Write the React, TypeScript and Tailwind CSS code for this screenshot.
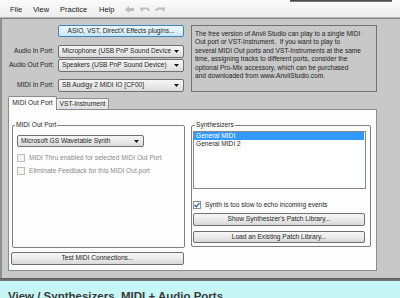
import React from "react";

function Arrow() {
  return (
    <svg width="5" height="3" viewBox="0 0 5 3" className="shrink-0">
      <path d="M0 0 L5 0 L2.5 3 Z" fill="#1a1a1a" />
    </svg>
  );
}

function Btn({ className, children }: { className: string; children: React.ReactNode }) {
  return (
    <div
      className={
        "flex items-center justify-center border border-[#707070] rounded-[2px] bg-linear-to-b from-[#f5f5f5] via-[#ebebeb] to-[#d8d8d8] text-[#1e1e1e] whitespace-nowrap " +
        className
      }
    >
      {children}
    </div>
  );
}

function Combo({ className, text }: { className: string; text: string }) {
  return (
    <div
      className={
        "flex items-center border border-[#707070] rounded-[2px] bg-linear-to-b from-[#f5f5f5] via-[#ebebeb] to-[#dadada] pl-[3px] pr-[4px] " +
        className
      }
    >
      <span className="flex-1 overflow-hidden whitespace-nowrap text-[#1e1e1e]">{text}</span>
      <span className="ml-[3px] flex items-center">
        <Arrow />
      </span>
    </div>
  );
}

export default function App() {
  return (
    <div className="w-[400px] h-[298px] overflow-hidden flex flex-col bg-[#c8c8c8] text-[#1f1f1f] text-[6.6px] leading-none font-['Liberation_Sans',Arial,sans-serif]">
      {/* Menu bar */}
      <div className="h-[18px] shrink-0 flex flex-col bg-linear-to-b from-[#fbfbfb] to-[#ededed] border-b border-[#b3b3b3]">
        <div className="h-[2px] shrink-0 flex">
          <div className="w-[290px]" />
          <div className="w-[102px] bg-linear-to-b from-[#3a3a3a] to-[#8c8c8c]" />
        </div>
        <div className="flex items-center h-[15px] text-[7.5px] text-[#1a1a1a]">
          <span className="w-[33px] pl-[10px]">File</span>
          <span className="w-[27px]">View</span>
          <span className="w-[39px]">Practice</span>
          <span className="w-[25px]">Help</span>
          <svg width="9" height="7" viewBox="0 0 9 7" className="ml-[1px]">
            <path d="M0 3.5 L4 0 L4 2 L9 2 L9 5 L4 5 L4 7 Z" fill="#bcbcbc" />
          </svg>
          <svg width="12" height="8" viewBox="0 0 12 8" className="ml-[5px]">
            <path d="M3.5 3.5 Q7 0.5 10.5 4.5" stroke="#bdbdbd" strokeWidth="2" fill="none" />
            <path d="M0.5 1.5 L5 1.5 L2.5 6 Z" fill="#bdbdbd" />
          </svg>
          <svg width="12" height="8" viewBox="0 0 12 8" className="ml-[3px]">
            <path d="M8.5 3.5 Q5 0.5 1.5 4.5" stroke="#bdbdbd" strokeWidth="2" fill="none" />
            <path d="M11.5 1.5 L7 1.5 L9.5 6 Z" fill="#bdbdbd" />
          </svg>
        </div>
      </div>

      {/* Main gray area */}
      <div className="h-[260px] shrink-0 flex flex-col border-t border-l-2 border-t-[#858585] border-l-[#8f8f8f]">
        <div className="flex items-start">
          <div className="w-[182px] flex flex-col">
            <div className="ml-[56px] mt-[6px] w-[126px] h-[12px] flex items-center justify-center border border-[#3f86bd] rounded-[2px] bg-linear-to-b from-[#eef8fd] via-[#e0f1fb] to-[#c9e6f7] text-[#1e1e1e] whitespace-nowrap">
              ASIO, VST, DirectX Effects plugins...
            </div>
            <div className="flex items-center mt-[8px]">
              <span className="w-[52px] text-right whitespace-nowrap">Audio In Port:</span>
              <Combo className="ml-[4px] w-[126px] h-[13px]" text="Microphone (USB PnP Sound Device)" />
            </div>
            <div className="flex items-center mt-[1px]">
              <span className="w-[52px] text-right whitespace-nowrap">Audio Out Port:</span>
              <Combo className="ml-[4px] w-[126px] h-[13px]" text="Speakers (USB PnP Sound Device)" />
            </div>
            <div className="flex items-center mt-[7px]">
              <span className="w-[52px] text-right whitespace-nowrap">MIDI In Port:</span>
              <Combo className="ml-[4px] w-[126px] h-[13px]" text="SB Audigy 2 MIDI IO [CF00]" />
            </div>
          </div>
          <div className="ml-[7px] mt-[6px] w-[186px] h-[67px] border border-[#727272] pl-[3px] pt-[4px] leading-[8.4px] whitespace-nowrap text-[#1e1e1e]">
            The free version of Anvil Studio can play to a single MIDI
            <br />
            Out port or VST-Instrument.&nbsp; If you want to play to
            <br />
            several MIDI Out ports and VST-Instruments at the same
            <br />
            time, assigning tracks to different ports, consider the
            <br />
            optional Pro-Mix accessory, which can be purchased
            <br />
            and downloaded from www.AnvilStudio.com.
          </div>
        </div>

        {/* Tabs */}
        <div className="mt-[4px] ml-[6px] h-[13px] flex items-end">
          <div className="relative z-10 w-[49px] h-[14px] -mb-[1px] bg-[#fdfdfd] border border-b-0 border-[#898c95] rounded-t-[2px] flex items-center justify-center whitespace-nowrap">
            MIDI Out Port
          </div>
          <div className="w-[52px] h-[11px] border border-l-0 border-b-0 border-[#898c95] rounded-tr-[2px] bg-linear-to-b from-[#f3f3f3] to-[#e0e0e0] flex items-center justify-center whitespace-nowrap">
            VST-Instrument
          </div>
        </div>

        {/* Tab panel */}
        <div className="ml-[6px] w-[369px] h-[162px] bg-[#fdfdfd] border border-[#898c95] flex items-start">
          <div className="ml-[3px] w-[173px] flex flex-col">
            <fieldset className="mt-[11px] h-[127px] border border-[#7f7f7f] rounded-[2px]">
              <legend className="ml-[2px] px-[1px] leading-[8px]">MIDI Out Port</legend>
              <Combo className="mt-[6px] ml-[4px] w-[127px] h-[12px]" text="Microsoft GS Wavetable Synth" />
              <div className="mt-[7px] ml-[4px] h-[8px] flex items-center">
                <span className="w-[8px] h-[8px] border border-[#bcbcbc] bg-[#f4f4f4]" />
                <span className="ml-[4px] text-[#8a8a8a] whitespace-nowrap">MIDI Thru enabled for selected MIDI Out Port</span>
              </div>
              <div className="mt-[5px] ml-[4px] h-[8px] flex items-center">
                <span className="w-[8px] h-[8px] border border-[#bcbcbc] bg-[#f4f4f4]" />
                <span className="ml-[4px] text-[#8a8a8a] whitespace-nowrap">Eliminate Feedback for this MIDI Out port</span>
              </div>
            </fieldset>
            <Btn className="mt-[4px] -ml-[1px] w-[173px] h-[13px]">Test MIDI Connections...</Btn>
          </div>

          <fieldset className="ml-[6px] mt-[11px] w-[180px] h-[126px] border border-[#7f7f7f] rounded-[2px]">
            <legend className="ml-[3px] px-[1px] leading-[8px]">Synthesizers</legend>
            <div className="mt-[2px] ml-[1px] w-[173px] h-[58px] border border-[#828790] bg-white flex flex-col">
              <div className="h-[8px] mr-[1px] bg-[#3399ff] text-white pl-[2px] flex items-center">General MIDI</div>
              <div className="h-[8px] pl-[2px] flex items-center">General MIDI 2</div>
            </div>
            <div className="mt-[12px] ml-[1px] h-[8px] flex items-center">
              <span className="w-[8px] h-[8px] border border-[#8e8f8f] bg-white flex items-center justify-center">
                <svg width="6" height="6" viewBox="0 0 6 6">
                  <path d="M0.6 3 L2.3 4.8 L5.4 0.8" stroke="#2a5ea8" strokeWidth="1.3" fill="none" />
                </svg>
              </span>
              <span className="ml-[4px] whitespace-nowrap">Synth is too slow to echo incoming events</span>
            </div>
            <Btn className="mt-[4px] ml-[1px] w-[172px] h-[13px]">Show Synthesizer&apos;s Patch Library...</Btn>
            <Btn className="mt-[5px] ml-[1px] w-[172px] h-[12px]">Load an Existing Patch Library...</Btn>
          </fieldset>
        </div>
      </div>

      {/* Separator */}
      <div className="h-[3px] shrink-0 bg-linear-to-b from-[#5c5c5c] to-[#7c7c7c]" />

      {/* Status / title bar */}
      <div className="flex-1 bg-[#c6f6f6] pl-[8px] pt-[8px] text-[11.5px] font-bold text-[#3a3a3a] whitespace-nowrap leading-[14px]">
        View / Synthesizers, MIDI + Audio Ports
      </div>
    </div>
  );
}
